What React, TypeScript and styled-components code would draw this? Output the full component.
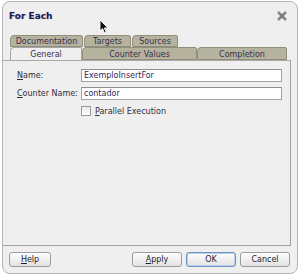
import React from 'react';
import styled, { createGlobalStyle } from 'styled-components';

const GlobalStyle = createGlobalStyle`
  body {
    margin: 0;
    background: #ffffff;
    font-family: 'DejaVu Sans', 'Liberation Sans', sans-serif;
  }
`;

const Window = styled.div`
  position: relative;
  box-sizing: border-box;
  width: 296px;
  height: 273px;
  margin: 1px 0 0 2px;
  border: 1px solid #b4b4b4;
  border-radius: 8px;
  background: #efefef;
  display: flex;
  flex-direction: column;
  overflow: hidden;
`;

const TitleBar = styled.div`
  height: 28px;
  display: flex;
  align-items: center;
  justify-content: space-between;
  padding: 0 10px 0 6px;
`;

const Title = styled.span`
  font-size: 9px;
  font-weight: bold;
  color: #1c1c52;
  text-shadow: 0 0 1px rgba(70, 70, 170, 0.45);
`;

const Cursor = styled.svg`
  position: absolute;
  left: 96px;
  top: 17px;
`;

const TabRow = styled.div<{ $top?: boolean }>`
  display: flex;
  gap: ${(p) => (p.$top ? '1px' : '0')};
  margin-left: 7px;
  margin-top: ${(p) => (p.$top ? '5px' : '0')};
  height: ${(p) => (p.$top ? '12px' : '13px')};
`;

const Tab = styled.div<{ $w: number; $active?: boolean }>`
  box-sizing: border-box;
  width: ${(p) => p.$w}px;
  height: 100%;
  display: flex;
  align-items: center;
  justify-content: center;
  font-size: 8px;
  color: #35304e;
  background: ${(p) => (p.$active ? '#efefef' : '#b5b39d')};
  border: 1px solid ${(p) => (p.$active ? '#a4a4a4' : '#908e7c')};
  border-bottom: ${(p) => (p.$active ? 'none' : '1px solid #908e7c')};
  border-radius: 4px 2px 0 0;
  padding-top: 1px;
`;

const Panel = styled.div`
  flex: 1;
  margin-right: 6px;
  border-top: 1px solid #a8a8a8;
  border-right: 1px solid #a0a0a0;
  border-bottom: 1px solid #a0a0a0;
  padding: 8px 0 0 14px;
`;

const Form = styled.div`
  display: grid;
  grid-template-columns: 64px 201px;
  row-gap: 5px;
  align-items: center;
`;

const Label = styled.label`
  font-size: 8px;
  color: #2e2e3e;
  u {
    text-decoration: underline;
  }
`;

const Input = styled.div`
  box-sizing: border-box;
  height: 13px;
  border: 1px solid #a2a2a2;
  border-top-color: #8e8e8e;
  background: #ffffff;
  font-size: 8px;
  color: #32285a;
  line-height: 11px;
  padding-left: 2px;
`;

const CheckRow = styled.div`
  grid-column: 2;
  display: flex;
  align-items: center;
  gap: 4px;
  margin-top: 1px;
`;

const Box = styled.span`
  box-sizing: border-box;
  width: 10px;
  height: 10px;
  border: 1px solid #9a9a9a;
  background: linear-gradient(#e8e8e8, #ffffff);
`;

const Footer = styled.div`
  display: flex;
  align-items: center;
  gap: 4px;
  padding: 6px 7px 6px 6px;
`;

const Button = styled.button<{ $w: number; $focus?: boolean }>`
  box-sizing: border-box;
  width: ${(p) => p.$w}px;
  height: 15px;
  padding: 0;
  font-family: 'DejaVu Sans', 'Liberation Sans', sans-serif;
  font-size: 8px;
  color: #222230;
  background: linear-gradient(#fefefe, #e2e2e2);
  border: 1px solid ${(p) => (p.$focus ? '#6f93c6' : '#9c9c9c')};
  box-shadow: ${(p) => (p.$focus ? 'inset 0 0 0 1px #b9cde8' : 'none')};
  border-radius: 3px;
`;

const Spacer = styled.div`
  flex: 1;
`;

const CloseIcon = () => (
  <svg width="10" height="10" viewBox="0 0 10 10">
    <path d="M2 2 L8 8 M8 2 L2 8" stroke="#8a8a8a" strokeWidth="2.8" strokeLinecap="square" />
    <path d="M2.5 2.5 L7.5 7.5 M7.5 2.5 L2.5 7.5" stroke="#6a6a6a" strokeWidth="0.8" />
  </svg>
);

export default function App() {
  return (
    <>
      <GlobalStyle />
      <Window>
        <TitleBar>
          <Title>For Each</Title>
          <CloseIcon />
        </TitleBar>
        <Cursor width="11" height="16" viewBox="0 0 11 16">
          <path d="M1 1 L1 12 L3.6 9.6 L5.4 14 L7.2 13.2 L5.4 9 L9 9 Z" fill="#111" stroke="#fff" strokeWidth="0.9" />
        </Cursor>
        <TabRow $top>
          <Tab $w={73}>Documentation</Tab>
          <Tab $w={47}>Targets</Tab>
          <Tab $w={46}>Sources</Tab>
        </TabRow>
        <TabRow>
          <Tab $w={72} $active>General</Tab>
          <Tab $w={115}>Counter Values</Tab>
          <Tab $w={90}>Completion</Tab>
        </TabRow>
        <Panel>
          <Form>
            <Label><u>N</u>ame:</Label>
            <Input>ExemploInsertFor</Input>
            <Label><u>C</u>ounter Name:</Label>
            <Input>contador</Input>
            <CheckRow>
              <Box />
              <Label><u>P</u>arallel Execution</Label>
            </CheckRow>
          </Form>
        </Panel>
        <Footer>
          <Button $w={42}><u>H</u>elp</Button>
          <Spacer />
          <Button $w={50}><u>A</u>pply</Button>
          <Button $w={50} $focus>OK</Button>
          <Button $w={50}>Cancel</Button>
        </Footer>
      </Window>
    </>
  );
}
